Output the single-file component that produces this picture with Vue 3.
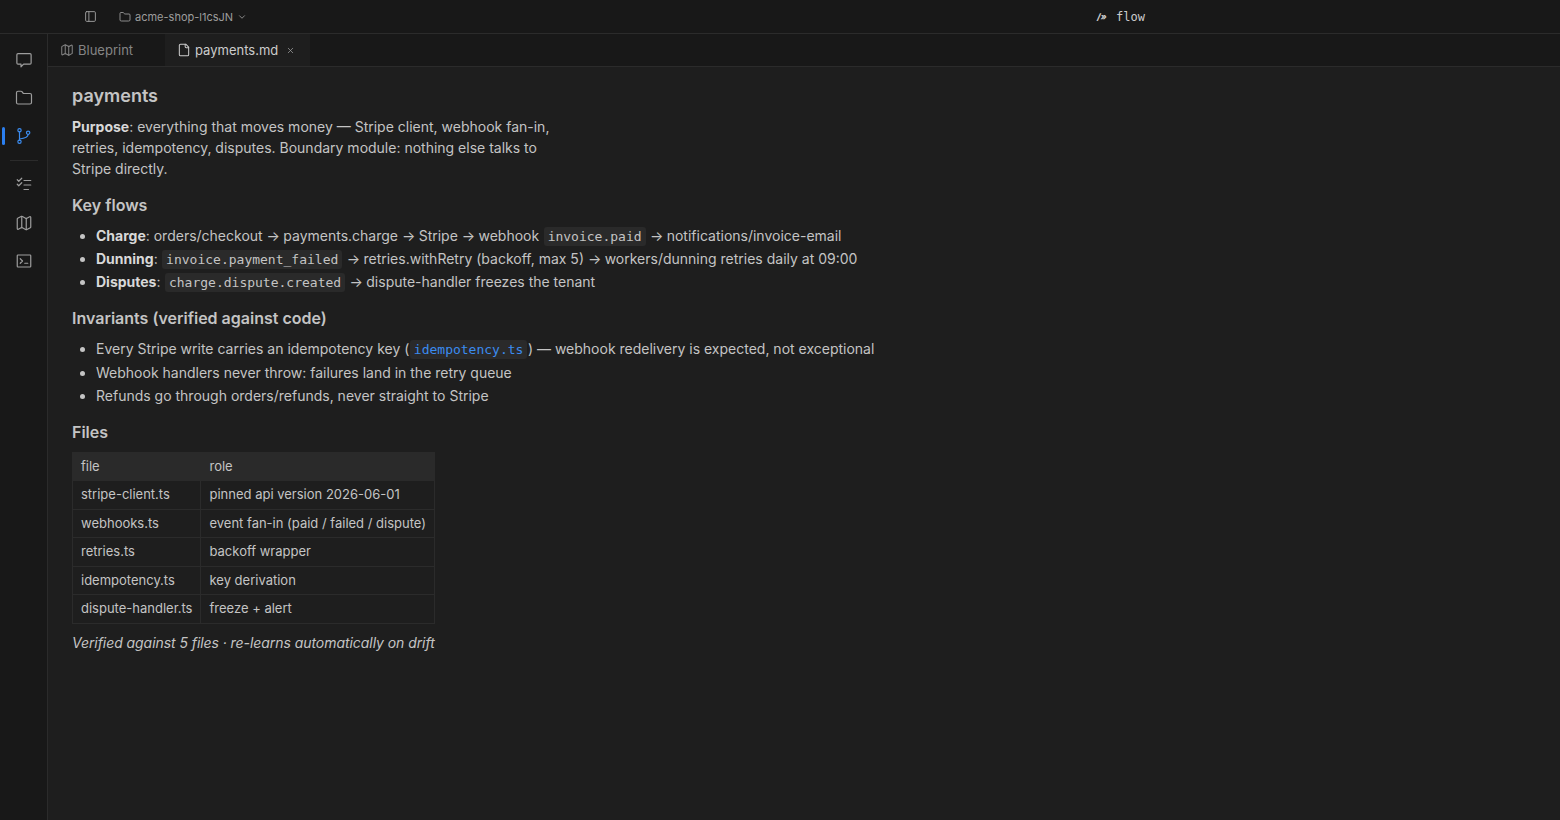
<template>
  <div class="app">
    <header class="topbar">
      <div class="top-left">
        <svg class="ico panel" viewBox="0 0 24 24"><rect x="3" y="3" width="18" height="18" rx="2" /><path d="M9 3v18" /></svg>
        <div class="project">
          <svg class="ico small" viewBox="0 0 24 24"><path d="M20 20a2 2 0 0 0 2-2V8a2 2 0 0 0-2-2h-7.9a2 2 0 0 1-1.69-.9L9.6 3.9A2 2 0 0 0 7.93 3H4a2 2 0 0 0-2 2v13a2 2 0 0 0 2 2Z" /></svg>
          <span>acme-shop-l1csJN</span>
          <svg class="ico chev" viewBox="0 0 24 24"><path d="m6 9 6 6 6-6" /></svg>
        </div>
      </div>
      <div class="brand"><span class="mark">/»</span><span class="name">flow</span></div>
    </header>

    <div class="main">
      <nav class="rail">
        <button v-for="item in railTop" :key="item.id" class="rail-btn" :class="{ active: item.active }">
          <svg class="ico rail-ico" viewBox="0 0 24 24"><path v-for="d in item.paths" :key="d" :d="d" /></svg>
        </button>
        <div class="rail-sep"></div>
        <button v-for="item in railBottom" :key="item.id" class="rail-btn">
          <svg class="ico rail-ico" viewBox="0 0 24 24"><path v-for="d in item.paths" :key="d" :d="d" /></svg>
        </button>
      </nav>

      <section class="pane">
        <div class="tabs">
          <div class="tab">
            <svg class="ico tab-ico" viewBox="0 0 24 24"><path v-for="d in mapPaths" :key="d" :d="d" /></svg>
            <span>Blueprint</span>
          </div>
          <div class="tab current">
            <svg class="ico tab-ico" viewBox="0 0 24 24"><path d="M15 2H6a2 2 0 0 0-2 2v16a2 2 0 0 0 2 2h12a2 2 0 0 0 2-2V7Z" /><path d="M14 2v4a2 2 0 0 0 2 2h4" /></svg>
            <span>payments.md</span>
            <svg class="ico close" viewBox="0 0 24 24"><path d="M18 6 6 18" /><path d="m6 6 12 12" /></svg>
          </div>
        </div>

        <article class="doc">
          <h1>payments</h1>
          <p>
            <strong>Purpose</strong>: everything that moves money — Stripe client, webhook fan-in,<br />
            retries, idempotency, disputes. Boundary module: nothing else talks to<br />
            Stripe directly.
          </p>

          <h2>Key flows</h2>
          <ul>
            <li><strong>Charge</strong>: orders/checkout <span class="arr">→</span> payments.charge <span class="arr">→</span> Stripe <span class="arr">→</span> webhook <code>invoice.paid</code> <span class="arr">→</span> notifications/invoice-email</li>
            <li><strong>Dunning</strong>: <code>invoice.payment_failed</code> <span class="arr">→</span> retries.withRetry (backoff, max 5) <span class="arr">→</span> workers/dunning retries daily at 09:00</li>
            <li><strong>Disputes</strong>: <code>charge.dispute.created</code> <span class="arr">→</span> dispute-handler freezes the tenant</li>
          </ul>

          <h2>Invariants (verified against code)</h2>
          <ul>
            <li>Every Stripe write carries an idempotency key (<code class="link">idempotency.ts</code>) — webhook redelivery is expected, not exceptional</li>
            <li>Webhook handlers never throw: failures land in the retry queue</li>
            <li>Refunds go through orders/refunds, never straight to Stripe</li>
          </ul>

          <h2>Files</h2>
          <table>
            <thead>
              <tr><th>file</th><th>role</th></tr>
            </thead>
            <tbody>
              <tr v-for="row in files" :key="row.file">
                <td>{{ row.file }}</td>
                <td>{{ row.role }}</td>
              </tr>
            </tbody>
          </table>
          <p class="note"><em>Verified against 5 files · re-learns automatically on drift</em></p>
        </article>
      </section>
    </div>
  </div>
</template>

<script setup>
const mapPaths = [
  "M14.106 5.553a2 2 0 0 0 1.788 0l3.659-1.83A1 1 0 0 1 21 4.619v12.764a1 1 0 0 1-.553.894l-4.553 2.277a2 2 0 0 1-1.788 0l-4.212-2.106a2 2 0 0 0-1.788 0l-3.659 1.83A1 1 0 0 1 3 19.381V6.618a1 1 0 0 1 .553-.894l4.553-2.277a2 2 0 0 1 1.788 0z",
  "M15 5.764v15",
  "M9 3.236v15",
];

const railTop = [
  { id: "chat", paths: ["M4 3.5h16a1.5 1.5 0 0 1 1.5 1.5v11a1.5 1.5 0 0 1-1.5 1.5h-8.5L8 21v-3.5H4A1.5 1.5 0 0 1 2.500 16V5A1.500 1.500 0 0 1 4 3.500z"] },
  { id: "folder", paths: ["M20 20a2 2 0 0 0 2-2V8a2 2 0 0 0-2-2h-7.9a2 2 0 0 1-1.69-.9L9.6 3.9A2 2 0 0 0 7.93 3H4a2 2 0 0 0-2 2v13a2 2 0 0 0 2 2Z"] },
  {
    id: "branch",
    active: true,
    paths: [
      "M6 6.500v11",
      "M17.500 10c0 3.500-4 5-11.500 6",
      "M8.200 4.300a2.200 2.200 0 1 1-4.400 0a2.200 2.200 0 1 1 4.400 0",
      "M19.700 7.600a2.200 2.200 0 1 1-4.400 0a2.200 2.200 0 1 1 4.400 0",
      "M8.200 19.700a2.200 2.200 0 1 1-4.400 0a2.200 2.200 0 1 1 4.400 0",
    ],
  },
];

const railBottom = [
  { id: "tasks", paths: ["M12 6h9", "M12 12h9", "M12 18h6", "m3 11 2 2 4-4", "m3 5 2 2 4-4"] },
  { id: "map", paths: mapPaths },
  { id: "terminal", paths: ["m7 9 3 3-3 3", "M13 15h4", "M4 4h16a1 1 0 0 1 1 1v14a1 1 0 0 1-1 1H4a1 1 0 0 1-1-1V5a1 1 0 0 1 1-1z"] },
];

const files = [
  { file: "stripe-client.ts", role: "pinned api version 2026-06-01" },
  { file: "webhooks.ts", role: "event fan-in (paid / failed / dispute)" },
  { file: "retries.ts", role: "backoff wrapper" },
  { file: "idempotency.ts", role: "key derivation" },
  { file: "dispute-handler.ts", role: "freeze + alert" },
];
</script>

<style>
html,
body {
  margin: 0;
  background: #1e1e1e;
}
</style>

<style scoped>
.app {
  height: 820px;
  display: flex;
  flex-direction: column;
  overflow: hidden;
  background: #1e1e1e;
  color: #c4c4c4;
  font-family: Inter, "Noto Sans", sans-serif;
  font-size: 14px;
}

.ico {
  fill: none;
  stroke: currentColor;
  stroke-width: 2;
  stroke-linecap: round;
  stroke-linejoin: round;
  flex: none;
}

.topbar {
  height: 33px;
  flex: none;
  display: flex;
  align-items: center;
  background: #181818;
  border-bottom: 1px solid #2b2b2b;
  position: relative;
}

.top-left {
  display: flex;
  align-items: center;
  padding-left: 84px;
  color: #9d9d9d;
}

.panel {
  width: 13px;
  height: 13px;
  stroke-width: 1.75;
}

.project {
  display: flex;
  align-items: center;
  margin-left: 22px;
  font-size: 11px;
}

.project .small {
  width: 12px;
  height: 12px;
  margin-right: 4px;
  stroke-width: 1.75;
}

.chev {
  width: 10px;
  height: 10px;
  margin-left: 4px;
}

.brand {
  position: absolute;
  left: 1097px;
  top: 0;
  height: 33px;
  display: flex;
  align-items: center;
  font-family: "DejaVu Sans Mono", monospace;
}

.mark {
  font-family: Inter, sans-serif;
  font-size: 9px;
  font-weight: 800;
  font-style: italic;
  width: 19px;
  color: #cccccc;
}

.name {
  font-size: 12px;
  color: #cccccc;
}

.main {
  flex: 1;
  min-height: 0;
  display: flex;
}

.rail {
  width: 47px;
  flex: none;
  background: #181818;
  border-right: 1px solid #2b2b2b;
  display: flex;
  flex-direction: column;
  align-items: center;
  padding-top: 7px;
  box-sizing: content-box;
}

.rail-btn {
  width: 100%;
  height: 38px;
  padding: 0;
  border: none;
  background: none;
  color: #9d9d9d;
  display: flex;
  align-items: center;
  justify-content: center;
  position: relative;
}

.rail-btn.active {
  color: #3b8cf0;
}

.rail-btn.active::before {
  content: "";
  position: absolute;
  left: 2px;
  top: 10px;
  width: 3px;
  height: 18px;
  border-radius: 2px;
  background: #2b7ff0;
}

.rail-ico {
  width: 18px;
  height: 18px;
  stroke-width: 1.6;
}

.rail-sep {
  width: 28px;
  height: 1px;
  margin: 5px 0;
  background: #2b2b2b;
}

.pane {
  flex: 1;
  min-width: 0;
  display: flex;
  flex-direction: column;
}

.tabs {
  height: 32px;
  flex: none;
  display: flex;
  background: #181818;
  border-bottom: 1px solid #2b2b2b;
}

.tab {
  display: flex;
  align-items: center;
  width: 117px;
  padding-left: 12px;
  box-sizing: border-box;
  color: #858585;
  font-size: 13px;
}

.tab.current {
  width: 145px;
  background: #1e1e1e;
  color: #cccccc;
  padding-left: 12px;
}

.tab-ico {
  width: 14px;
  height: 14px;
  margin-right: 4px;
  stroke-width: 1.75;
}

.close {
  width: 9px;
  height: 9px;
  margin-left: 7.500px;
  color: #9d9d9d;
}

.doc {
  padding: 15px 24px;
  line-height: 21px;
}

h1 {
  margin: 0 0 7px;
  font-size: 18px;
  line-height: 27px;
  font-weight: 600;
}

h2 {
  margin: 14px 0 7.9px;
  font-size: 16px;
  line-height: 24px;
  font-weight: 600;
}

p {
  margin: 0;
}

strong {
  font-weight: 700;
  color: #d8d8d8;
}

ul {
  margin: 0;
  padding-left: 24px;
}

li {
  margin: 0 0 2.3px;
}

.arr {
  letter-spacing: -0.6px;
}

code {
  font-family: "DejaVu Sans Mono", monospace;
  font-size: 13px;
  line-height: 1;
  background: #2a2a2a;
  padding: 2px 4px;
  margin: 0 0.5px;
  border-radius: 3px;
}

code.link {
  color: #3b8cf0;
}

table {
  border-collapse: collapse;
  margin-top: 0;
  font-size: 13px;
}

th,
td {
  border: 1px solid #2b2b2b;
  padding: 4px 8px;
  text-align: left;
  font-weight: 400;
  line-height: 19.5px;
}

th {
  background: #2a2a2a;
  border-color: #2a2a2a;
}

.note {
  margin-top: 8px;
  letter-spacing: -0.06px;
}
</style>
